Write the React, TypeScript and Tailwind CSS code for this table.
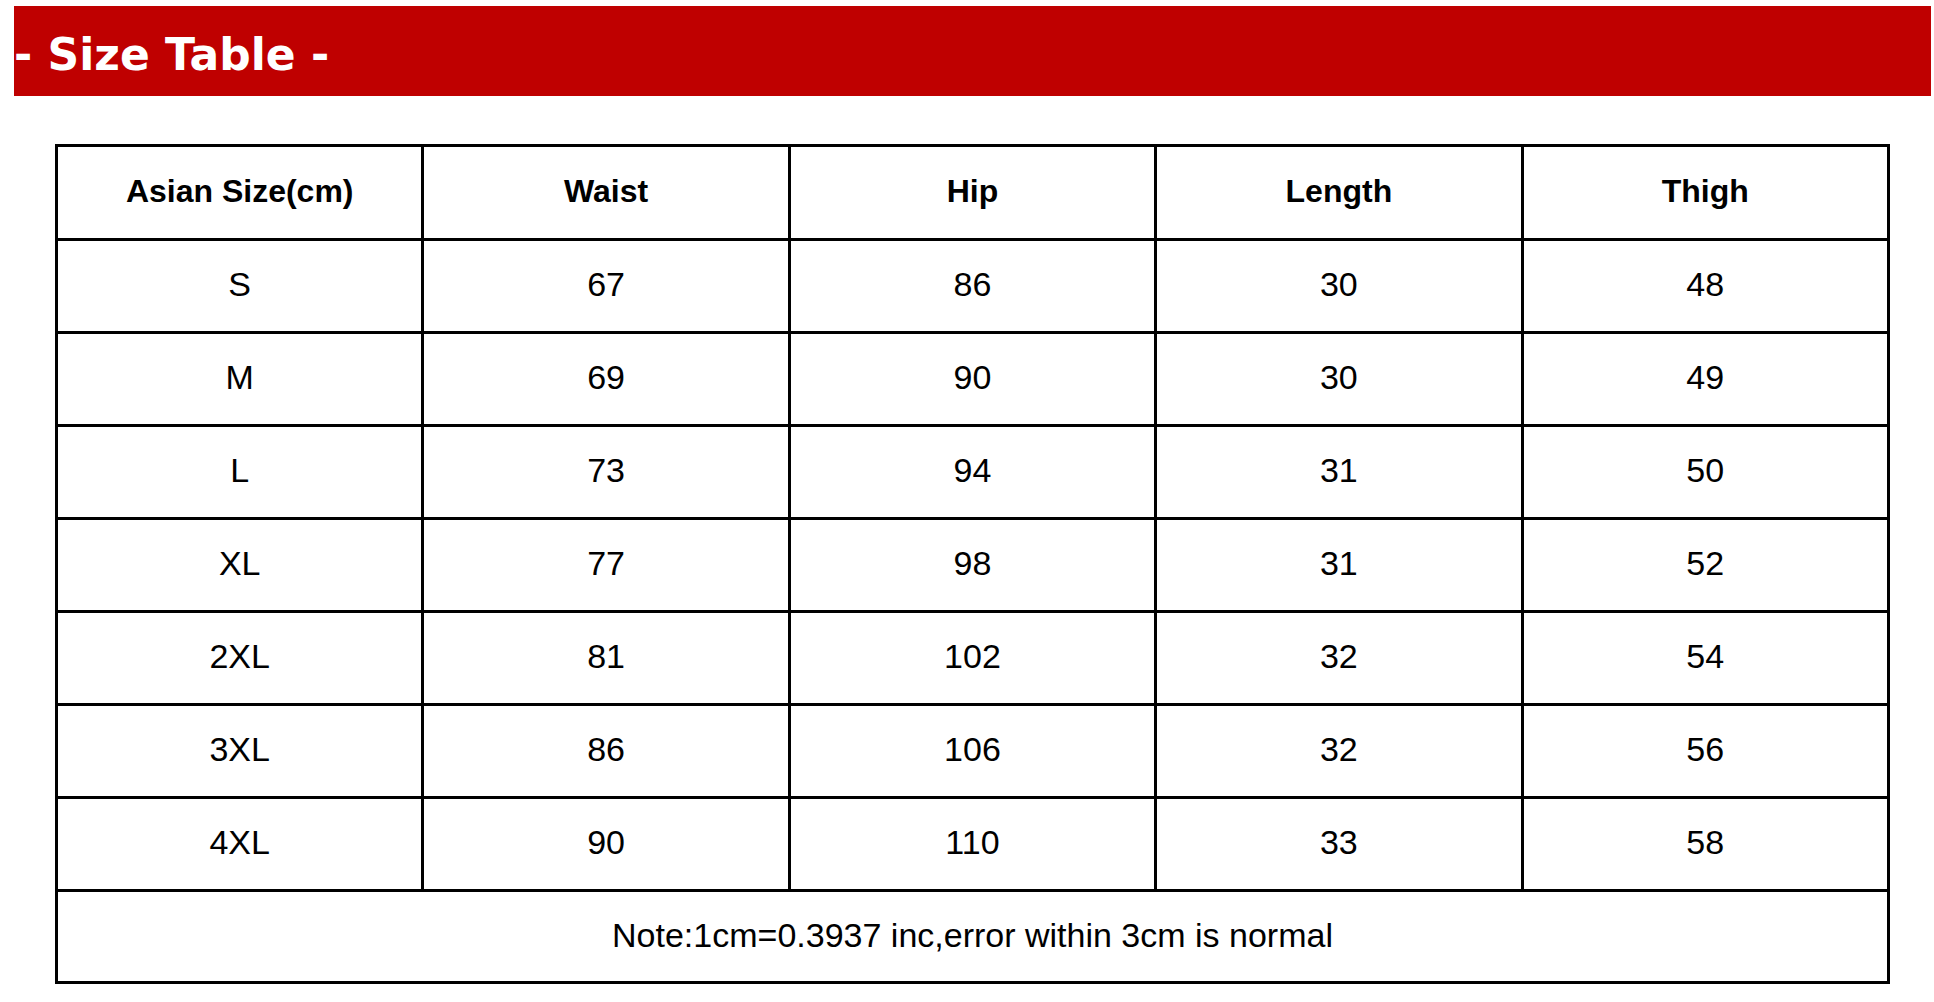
const headers = ['Asian Size(cm)', 'Waist', 'Hip', 'Length', 'Thigh'];

const rows: [string, number, number, number, number][] = [
  ['S', 67, 86, 30, 48],
  ['M', 69, 90, 30, 49],
  ['L', 73, 94, 31, 50],
  ['XL', 77, 98, 31, 52],
  ['2XL', 81, 102, 32, 54],
  ['3XL', 86, 106, 32, 56],
  ['4XL', 90, 110, 33, 58],
];

export default function App() {
  return (
    <div className="min-h-screen bg-white pt-[6px]">
      <div className="ml-[14px] mr-[3px] h-[90px] bg-[#bf0000] pt-[24px]">
        <p className="font-['DejaVu_Sans',sans-serif] text-[44px] font-bold leading-[50px] text-white whitespace-pre">
          - Size Table -
        </p>
      </div>

      <table className="mt-[48px] ml-[55px] w-[1835px] table-fixed border-collapse font-['Comic_Sans_MS','Liberation_Sans',sans-serif] text-black">
        <thead>
          <tr className="h-[94px]">
            {headers.map((h) => (
              <th key={h} className="border-[3px] border-black pb-[3px] text-center align-middle text-[32px] font-bold">
                {h}
              </th>
            ))}
          </tr>
        </thead>
        <tbody>
          {rows.map((r) => (
            <tr key={r[0]} className="h-[93px]">
              {r.map((v, i) => (
                <td key={i} className="border-[3px] border-black pb-[3px] text-center align-middle text-[34px]">
                  {v}
                </td>
              ))}
            </tr>
          ))}
          <tr className="h-[92px]">
            <td colSpan={5} className="border-[3px] border-black pb-[2px] text-center align-middle text-[34px]">
              Note:1cm=0.3937 inc,error within 3cm is normal
            </td>
          </tr>
        </tbody>
      </table>
    </div>
  );
}
